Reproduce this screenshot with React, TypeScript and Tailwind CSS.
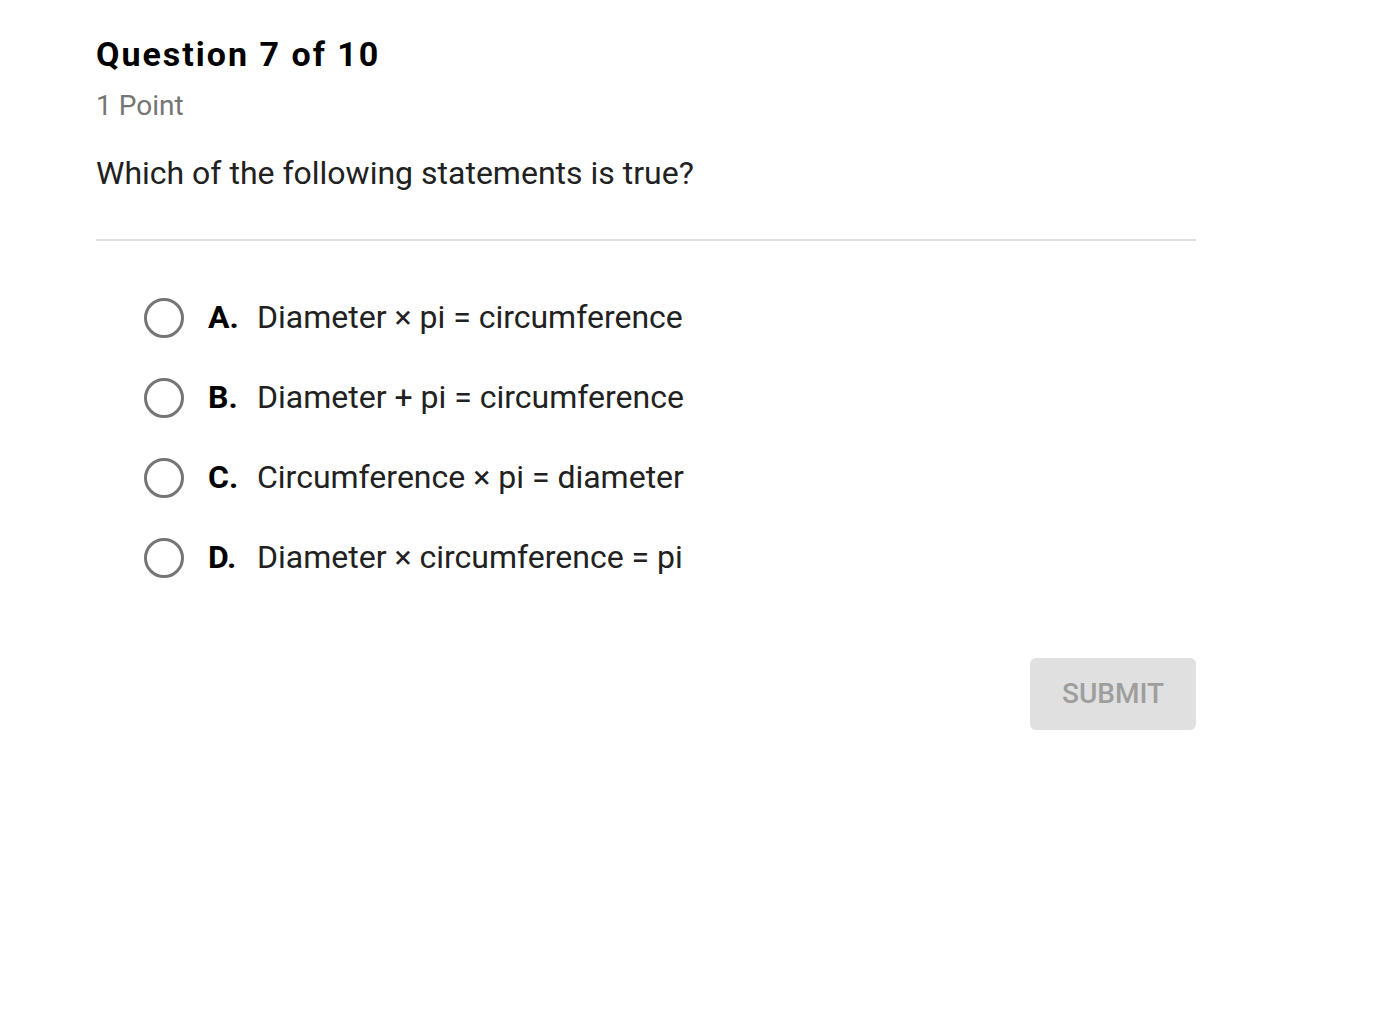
import { useState } from 'react';

const options = [
  { key: 'A', text: 'Diameter × pi = circumference' },
  { key: 'B', text: 'Diameter + pi = circumference' },
  { key: 'C', text: 'Circumference × pi = diameter' },
  { key: 'D', text: 'Diameter × circumference = pi' },
];

export default function App() {
  const [selected, setSelected] = useState<string | null>(null);

  return (
    <div className="min-h-screen bg-white font-['Roboto',sans-serif] text-[#212121]">
      <div className="w-[1100px] ml-[96px] pt-[34px]">
        <h1 className="text-[34px] leading-[40px] font-bold tracking-[2px] text-black">
          Question 7 of 10
        </h1>
        <p className="mt-[16px] text-[28px] leading-[32px] text-[#757575]">1 Point</p>
        <p className="mt-[33px] text-[32px] leading-[36px]">
          Which of the following statements is true?
        </p>
        <div className="mt-[48px] h-[2px] bg-[#e0e0e0]" />

        <div className="mt-[57px] flex flex-col gap-[40px] pl-[48px]">
          {options.map((opt) => (
            <label
              key={opt.key}
              className="flex items-center h-[40px] cursor-pointer"
              onClick={() => setSelected(opt.key)}
            >
              <span className="w-[40px] h-[40px] rounded-full border-[3px] border-[#757575] flex items-center justify-center">
                {selected === opt.key && (
                  <span className="w-[20px] h-[20px] rounded-full bg-[#757575]" />
                )}
              </span>
              <span className="ml-[24px] flex items-baseline -mt-[3px]">
                <span className="w-[49px] text-[32px] font-bold text-black">{opt.key}.</span>
                <span className="text-[32px]">{opt.text}</span>
              </span>
            </label>
          ))}
        </div>

        <div className="mt-[80px] flex justify-end">
          <button className="w-[166px] h-[72px] rounded-[6px] bg-[#e0e0e0] text-[28px] font-medium text-[#9e9e9e]">
            SUBMIT
          </button>
        </div>
      </div>
    </div>
  );
}
